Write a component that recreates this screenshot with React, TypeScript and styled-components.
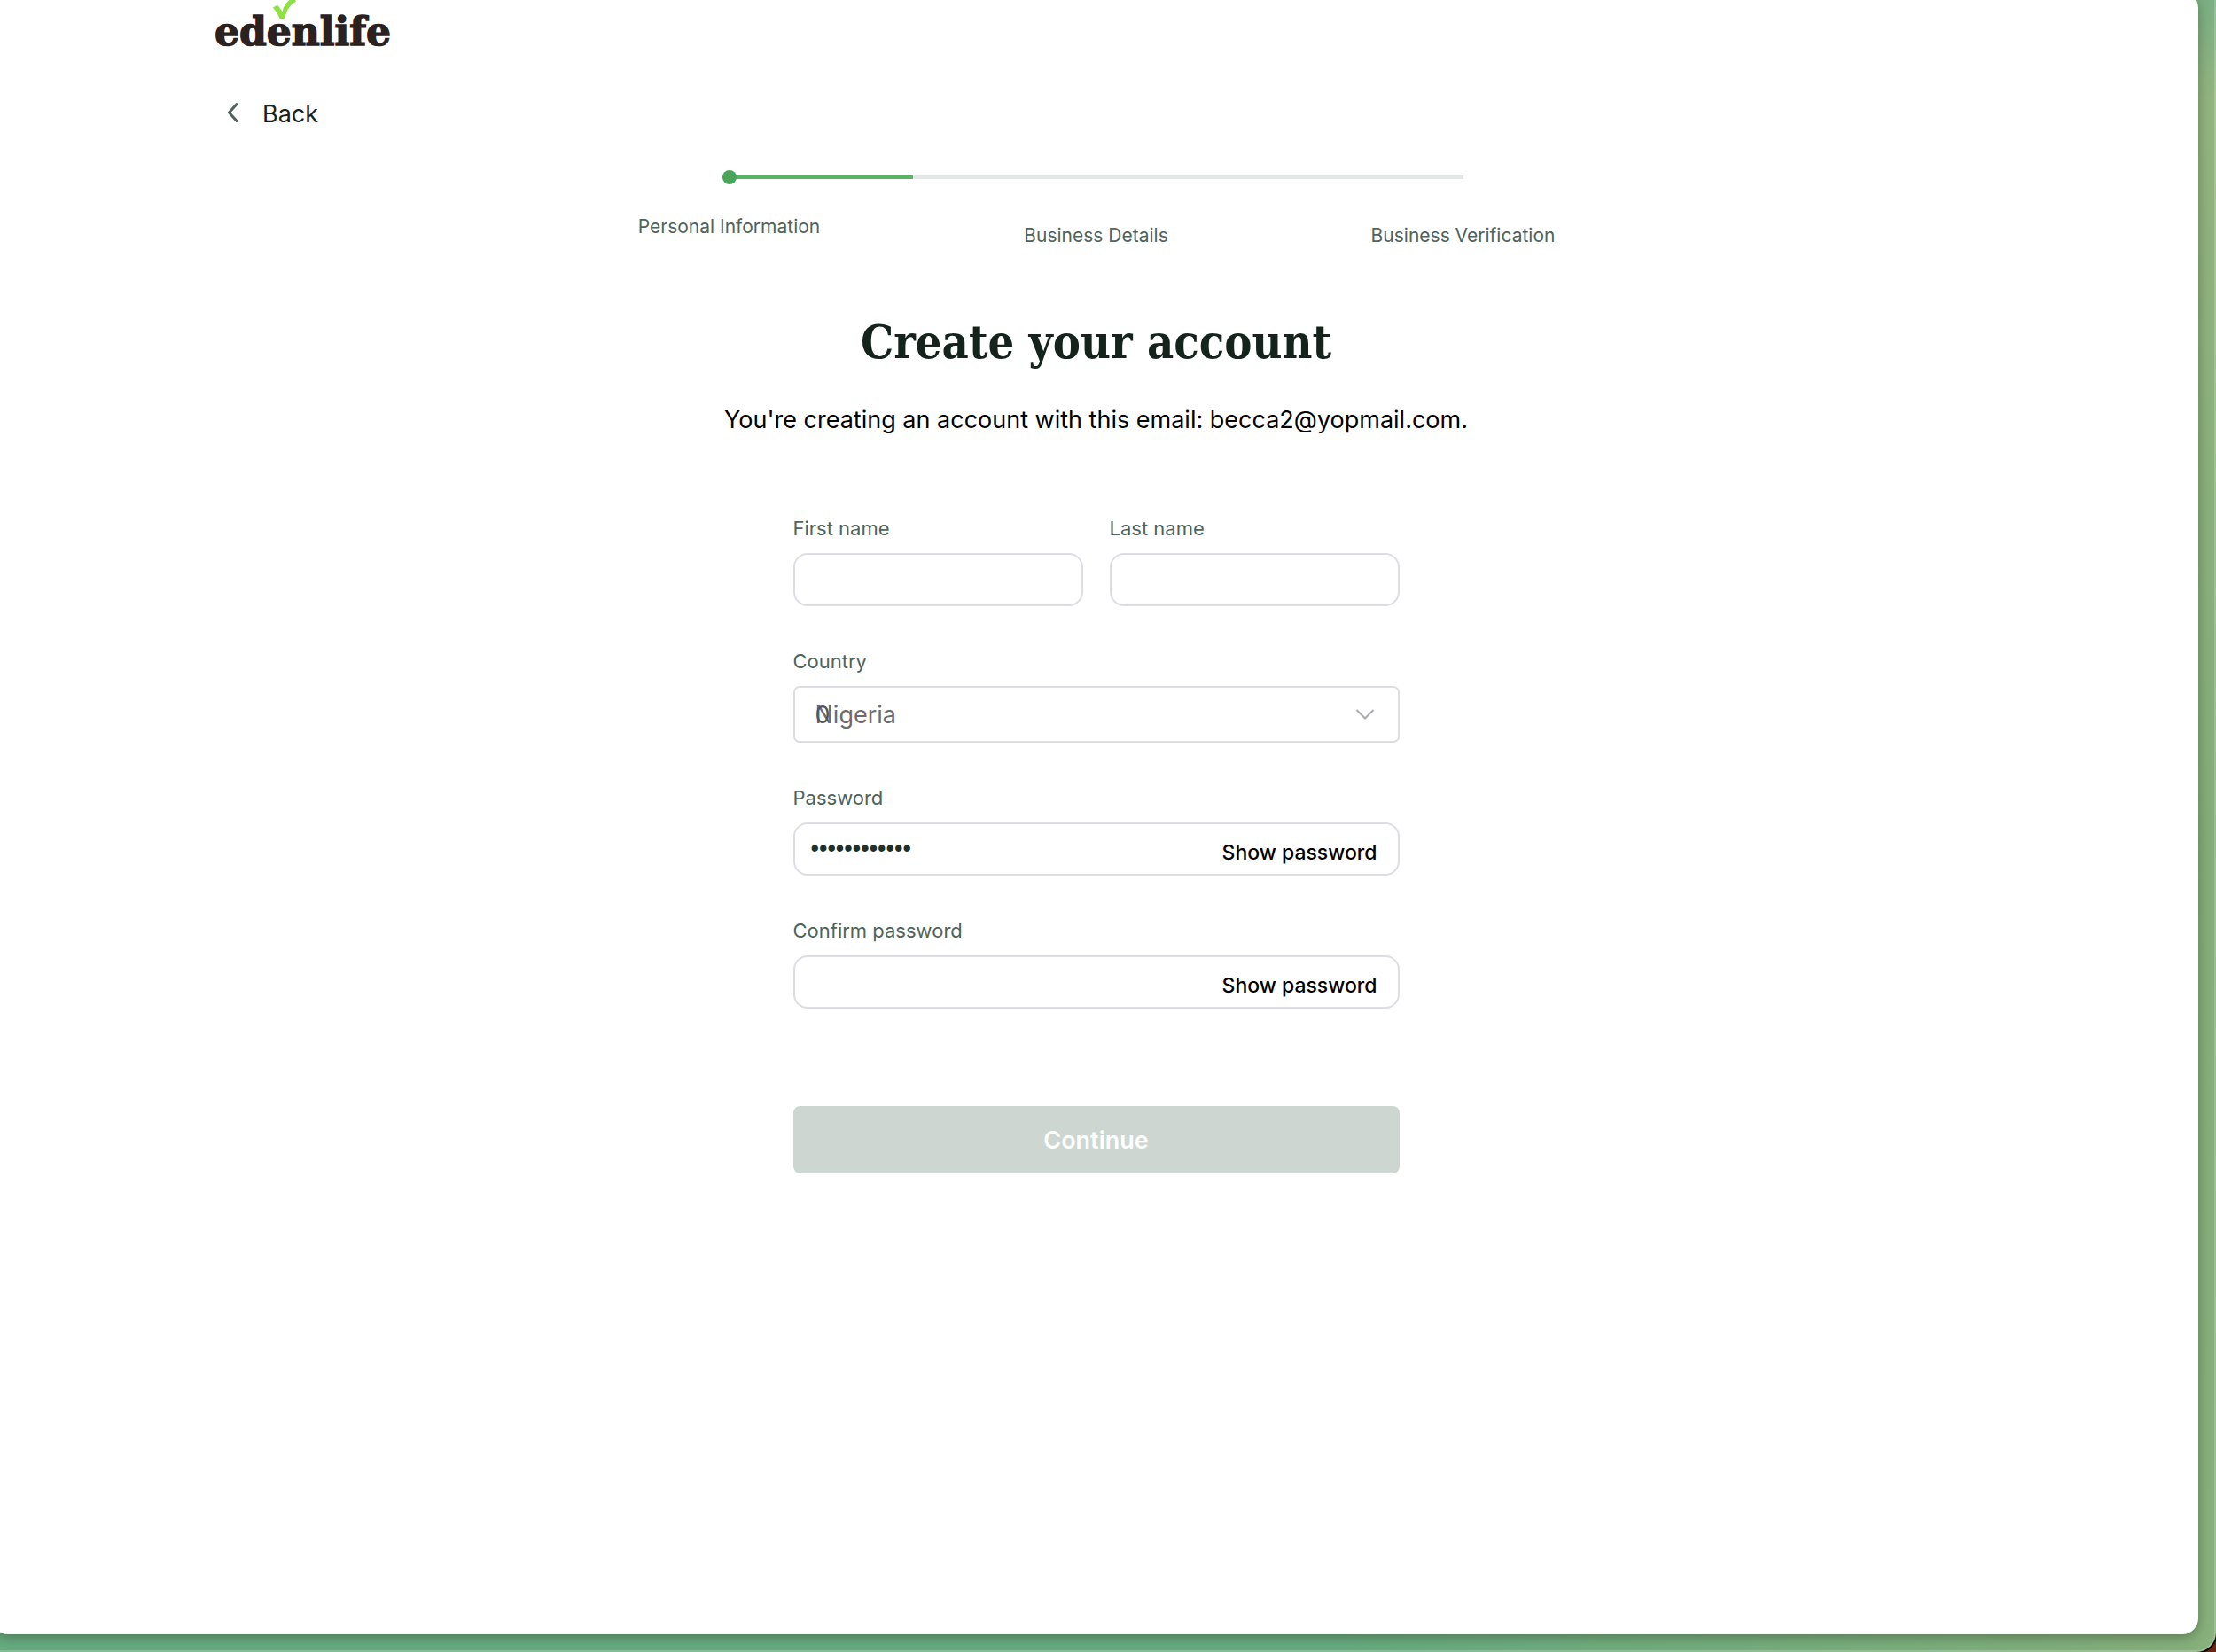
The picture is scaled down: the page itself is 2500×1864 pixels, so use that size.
import React, { useState } from 'react';
import styled, { createGlobalStyle } from 'styled-components';

const sans = `Inter, "Liberation Sans", sans-serif`;
const serif = `"DejaVu Serif Condensed", "DejaVu Serif", serif`;

const GlobalStyle = createGlobalStyle`
  *, *::before, *::after { box-sizing: border-box; }
  body { margin: 0; background: #6a2413; }
  button, input, select { font-family: inherit; }
`;

const Desktop = styled.div`
  display: flex;
  min-height: 100vh;
  padding: 0 20px 20px 0;
  overflow: hidden;
  font-family: ${sans};
  border: solid rgba(255, 255, 255, 0.18);
  border-width: 0 2px 2px 0;
  border-bottom-right-radius: 22px;
  box-shadow: 0 0 0 2px #0d0805;
  background:
    linear-gradient(to top, #87b17c 0, rgba(135, 177, 124, 0) 50%) right / 20px 100% no-repeat,
    linear-gradient(to bottom, #7bb084 0, #93b57f 110px, #84ae7a 50%) right / 20px 100% no-repeat,
    linear-gradient(to right, #66ad80 0, #66ad80 60%, #87b17c 100%);
  background-origin: border-box;
`;

const Window = styled.main`
  flex: 1;
  margin: -9px -2px -2px -9px;
  padding: 9px 250px 80px 252px;
  background: #fff;
  border-radius: 18px;
  box-shadow: 0 4px 14px rgba(50, 60, 40, 0.45);
`;

const Header = styled.header`
  display: flex;
  flex-direction: column;
  align-items: flex-start;
  gap: 49px;
`;

const Logo = styled.svg`
  display: block;
  overflow: visible;
  font: 700 44px/1 "DejaVu Serif", serif;
`;

const BackButton = styled.button`
  display: flex;
  align-items: center;
  gap: 27px;
  padding: 0 0 0 13px;
  border: 0;
  background: none;
  color: #14231c;
  font-size: 27px;
  line-height: 40px;
`;

const Progress = styled.section`
  width: 1242px;
  max-width: 100%;
  margin: 43px auto 0;
`;

const Rail = styled.div`
  display: flex;
  align-items: center;
  height: 16px;
  margin: 0 calc(100% / 6);
`;

const Track = styled.div`
  flex: 1;
  height: 4px;
  background: #e2e8e5;
`;

const Fill = styled.div<{ $percent: number }>`
  display: flex;
  align-items: center;
  width: ${(p) => p.$percent}%;
  height: 100%;
  background: #57b463;
`;

const Dot = styled.span`
  flex: none;
  width: 16px;
  height: 16px;
  margin-left: -8px;
  border-radius: 50%;
  background: #4aa55a;
`;

const Steps = styled.ol`
  display: grid;
  grid-template-columns: repeat(3, 1fr);
  margin: 33px 0 0;
  padding: 0;
  list-style: none;
`;

const Step = styled.li<{ $current?: boolean }>`
  padding-top: ${(p) => (p.$current ? 0 : 10)}px;
  color: #4f645c;
  font-size: 21px;
  line-height: 30px;
  text-align: center;
`;

const Title = styled.h1`
  margin: 70px 0 33px;
  color: #14231c;
  font: 700 52px/70px ${serif};
  text-align: center;
`;

const Subtitle = styled.p`
  margin: 0;
  color: #000;
  font-size: 27px;
  line-height: 40px;
  text-align: center;
`;

const Form = styled.form`
  display: flex;
  flex-direction: column;
  gap: 47px;
  width: 684px;
  max-width: 100%;
  margin: 87px auto 0;
`;

const NameRow = styled.div`
  display: grid;
  grid-template-columns: 1fr 1fr;
  gap: 30px;
`;

const Field = styled.div`
  display: flex;
  flex-direction: column;
  gap: 13px;
  min-width: 0;
`;

const Label = styled.label`
  color: #4f645c;
  font-size: 22px;
  line-height: 30px;
`;

const TextBox = styled.input`
  width: 100%;
  height: 60px;
  padding: 0 20px;
  border: 2px solid #dddde4;
  border-radius: 16px;
  background: #fff;
  color: #1e3028;
  font-size: 22px;
  outline: none;
`;

const PasswordBox = styled.div`
  display: flex;
  align-items: flex-start;
  height: 60px;
  padding: 0 23px 0 18px;
  border: 2px solid #dddde4;
  border-radius: 16px;
`;

const PasswordInput = styled.input`
  flex: 1;
  min-width: 0;
  height: 54px;
  padding: 0;
  border: 0;
  background: none;
  color: #1e3028;
  font-family: "Liberation Sans", sans-serif;
  font-size: 27px;
  outline: none;
`;

const ShowButton = styled.button`
  padding: 14px 0 0;
  border: 0;
  background: none;
  color: #000;
  font-size: 23px;
  font-weight: 500;
  line-height: 36px;
`;

const SelectBox = styled.div`
  position: relative;
  display: flex;
  align-items: center;
  height: 64px;
  padding: 0 26px 0 23px;
  border: 2px solid #dddde4;
  border-radius: 7px;
`;

const Select = styled.select`
  flex: 1;
  height: 100%;
  padding: 0;
  border: 0;
  appearance: none;
  background: none;
  color: #6b6b70;
  font-size: 27px;
  outline: none;
`;

const SearchInput = styled.input`
  position: absolute;
  top: 0;
  left: 23px;
  width: 30px;
  height: 100%;
  padding: 0;
  border: 0;
  background: none;
  color: #55555a;
  font-size: 27px;
  outline: none;
`;

const Submit = styled.button`
  height: 76px;
  margin-top: 63px;
  border: 0;
  border-radius: 8px;
  background: #cdd6d1;
  color: #fdfefe;
  font-size: 27px;
  font-weight: 600;
`;

function EdenlifeLogo() {
  return (
    <Logo width="200" height="60" viewBox="0 0 200 60" role="img" aria-label="edenlife">
      <text x="-1" y="51" fill="#2b211f" stroke="#2b211f" strokeWidth="1.500">edenlife</text>
      <path
        fill="#8ee044"
        d="M65 8.500 70 5.500 75.500 13C77 7 79.500 3 83.500 0H90.500V2C84 6 80 11 78.500 21H72.500C71 16.500 68 12.500 65 8.500Z"
      />
    </Logo>
  );
}

function PasswordField({ id, label, initial }: { id: string; label: string; initial: string }) {
  const [value, setValue] = useState(initial);
  const [shown, setShown] = useState(false);
  return (
    <Field>
      <Label htmlFor={id}>{label}</Label>
      <PasswordBox>
        <PasswordInput
          id={id}
          type={shown ? 'text' : 'password'}
          value={value}
          onChange={(e) => setValue(e.target.value)}
        />
        <ShowButton type="button" onClick={() => setShown(!shown)}>
          {shown ? 'Hide password' : 'Show password'}
        </ShowButton>
      </PasswordBox>
    </Field>
  );
}

export default function App() {
  return (
    <>
      <GlobalStyle />
      <Desktop>
        <Window>
          <Header>
            <EdenlifeLogo />
            <BackButton type="button">
              <svg width="13" height="28" viewBox="0 0 13 28" fill="none" aria-hidden="true">
                <path d="M11 2.500 2.500 12 11 21.500" stroke="#4f645c" strokeWidth="3" strokeLinecap="round" strokeLinejoin="round" />
              </svg>
              Back
            </BackButton>
          </Header>

          <Progress aria-label="Sign-up progress">
            <Rail>
              <Track>
                <Fill $percent={25}>
                  <Dot />
                </Fill>
              </Track>
            </Rail>
            <Steps>
              <Step $current aria-current="step">Personal Information</Step>
              <Step>Business Details</Step>
              <Step>Business Verification</Step>
            </Steps>
          </Progress>

          <Title>Create your account</Title>
          <Subtitle>You're creating an account with this email: becca2@yopmail.com.</Subtitle>

          <Form onSubmit={(e) => e.preventDefault()}>
            <NameRow>
              <Field>
                <Label htmlFor="first-name">First name</Label>
                <TextBox id="first-name" type="text" />
              </Field>
              <Field>
                <Label htmlFor="last-name">Last name</Label>
                <TextBox id="last-name" type="text" />
              </Field>
            </NameRow>
            <Field>
              <Label htmlFor="country">Country</Label>
              <SelectBox>
                <Select id="country" defaultValue="Nigeria">
                  <option>Nigeria</option>
                  <option>Kenya</option>
                </Select>
                <SearchInput type="text" aria-label="Search countries" defaultValue="0" />
                <svg width="22" height="14" viewBox="0 0 22 14" fill="none" aria-hidden="true">
                  <path d="M1.500 2 11 11.500 20.500 2" stroke="#a9a9ae" strokeWidth="2" />
                </svg>
              </SelectBox>
            </Field>
            <PasswordField id="password" label="Password" initial="password1234" />
            <PasswordField id="confirm-password" label="Confirm password" initial="" />
            <Submit type="submit" disabled>Continue</Submit>
          </Form>
        </Window>
      </Desktop>
    </>
  );
}
